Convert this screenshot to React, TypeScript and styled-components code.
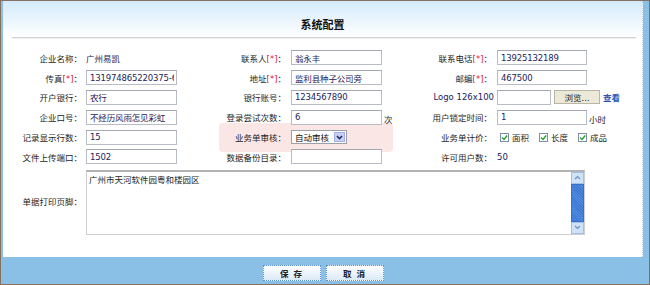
import React from 'react';
import styled, { createGlobalStyle } from 'styled-components';

const GlobalStyle = createGlobalStyle`
  html, body {
    margin: 0;
    padding: 0;
    background: #ffffff;
  }
  body {
    font-family: "DejaVu Sans", "Noto Sans CJK SC", sans-serif;
    font-size: 8.5px;
    color: #222;
  }
`;

const Frame = styled.div`
  width: 650px;
  height: 285px;
  box-sizing: border-box;
  border: 1px solid #85705f;
  background: #8bc0e6;
  display: flex;
  flex-direction: column;
`;

const Panel = styled.div`
  height: 256px;
  margin: 0 6px 0 2px;
  background: #ffffff;
  border-right: 1px dotted #b9d6ef;
  box-sizing: border-box;
`;

const Header = styled.div`
  height: 36px;
  padding-top: 18px;
  box-sizing: border-box;
  background: linear-gradient(#d3eafb, #ffffff);
  text-align: center;
`;

const Title = styled.div`
  font-size: 11px;
  line-height: 13px;
  font-weight: bold;
  color: #111;
`;

const Divider = styled.div`
  height: 1px;
  margin: 0 6px 0 9px;
  background: #d3d3d3;
  border-bottom: 1px solid #efefef;
`;

const FormGrid = styled.div`
  display: grid;
  grid-template-columns: 83px 124px 81px 129px 77px 1fr;
  grid-template-rows: repeat(6, 19.8px) auto;
  margin-top: 9px;
  align-items: center;
  isolation: isolate;
`;

const Label = styled.div<{ $pad?: number }>`
  text-align: right;
  padding-right: ${(p) => (p.$pad ?? 4)}px;
  white-space: nowrap;
  color: #1e1e1e;
`;

const Req = styled.span`
  color: #e31b1b;
`;

const Cell = styled.div`
  display: flex;
  align-items: center;
  gap: 2px;
  white-space: nowrap;
`;

const TextInput = styled.input<{ $w?: number }>`
  width: ${(p) => p.$w ?? 91}px;
  height: 15px;
  box-sizing: border-box;
  border: 1px solid #b8bcc6;
  border-top-color: #a3a7b1;
  padding: 0 2px 0 3px;
  font: inherit;
  letter-spacing: -0.15px;
  color: #22235c;
  background: #ffffff;
  outline: none;
`;

const Value = styled.span`
  color: #22235c;
`;

const Unit = styled.span`
  margin-top: 4px;
  color: #1e1e1e;
`;

const BrowseButton = styled.button`
  width: 46px;
  height: 14px;
  margin-left: 1px;
  padding: 0;
  font: inherit;
  color: #222;
  background: #ece9d8;
  border: 1px solid #b9b6a6;
`;

const ViewLink = styled.a`
  margin-left: 1px;
  color: #2a55b5;
  font-weight: bold;
  text-decoration: none;
`;

const AuditLabel = styled(Label)`
  position: relative;
  &::before {
    content: '';
    position: absolute;
    left: 9px;
    top: -8px;
    bottom: -9px;
    width: 174px;
    background: #fbe6e6;
    border-radius: 4px;
    z-index: -1;
  }
`;

const SelectBox = styled.div`
  width: 56px;
  height: 14px;
  box-sizing: border-box;
  border: 1px solid #9d9fa8;
  background: #ffffff;
  display: flex;
  align-items: center;
  justify-content: space-between;
  padding-left: 3px;
  color: #111;
`;

const SelectArrow = styled.span`
  width: 11px;
  height: 10px;
  margin-right: 1px;
  background: #c9d0f3;
  border: 1px solid #a3afe6;
  box-sizing: border-box;
  display: flex;
  align-items: center;
  justify-content: center;
`;

const Checks = styled.div`
  display: flex;
  align-items: center;
  gap: 10px;
  padding-left: 3px;
`;

const CheckItem = styled.label`
  display: flex;
  align-items: center;
  gap: 3px;
  color: #1e1e1e;
`;

const CheckBox = styled.span`
  width: 9px;
  height: 9px;
  box-sizing: border-box;
  border: 1px solid #7d8fa8;
  background: #ffffff;
  display: flex;
  align-items: center;
  justify-content: center;
`;

const MemoLabel = styled(Label)`
  grid-column: 1;
`;

const MemoBox = styled.div`
  grid-column: 2 / span 5;
  width: 499px;
  height: 65px;
  margin-top: 3px;
  box-sizing: border-box;
  border: 1px solid #cfcfcf;
  border-top: 2px solid #b3b3b3;
  display: flex;
`;

const MemoText = styled.textarea`
  flex: 1;
  border: none;
  resize: none;
  padding: 1px 2px;
  font: inherit;
  color: #222;
  outline: none;
  overflow: hidden;
`;

const ScrollBar = styled.div`
  width: 13px;
  display: flex;
  flex-direction: column;
  background: #c4dbf5;
`;

const ScrollBtn = styled.div`
  height: 12px;
  box-sizing: border-box;
  border: 1px solid #9fc0ea;
  background: #cfe2f8;
  display: flex;
  align-items: center;
  justify-content: center;
`;

const ScrollThumb = styled.div`
  flex: 1;
  background: repeating-linear-gradient(45deg, #3d7ad6 0 1px, #4f8ae0 1px 2px);
  border: 1px solid #3a6fc5;
`;

const BottomBar = styled.div`
  flex: 1;
  display: flex;
  justify-content: center;
  align-items: flex-start;
  gap: 5px;
  padding: 8px 6px 0 2px;
`;

const ActionButton = styled.button`
  width: 58px;
  height: 16px;
  padding: 0;
  font: inherit;
  font-weight: bold;
  letter-spacing: 1px;
  color: #222;
  background: linear-gradient(#ffffff, #dbe9f8);
  border: 1px dotted #5f93cf;
  white-space: pre;
`;

const Arrow = ({ up }: { up?: boolean }) => (
  <svg width="7" height="5" viewBox="0 0 7 5">
    <path
      d={up ? 'M1 4 L3.5 1.5 L6 4' : 'M1 1 L3.5 3.5 L6 1'}
      fill="none"
      stroke="#6f92c4"
      strokeWidth="1.2"
    />
  </svg>
);

const Check = () => (
  <svg width="7" height="7" viewBox="0 0 7 7">
    <path d="M1 3.5 L3 5.5 L6.2 1.5" fill="none" stroke="#22a033" strokeWidth="1.4" />
  </svg>
);

function Required({ text }: { text: string }) {
  return (
    <>
      {text}
      <Req>[*]</Req>：
    </>
  );
}

function App() {
  return (
    <>
      <GlobalStyle />
      <Frame>
        <Panel>
          <Header>
            <Title>系统配置</Title>
          </Header>
          <Divider />
          <FormGrid>
            <Label>企业名称：</Label>
            <Cell>
              <Value>广州易凯</Value>
            </Cell>
            <Label $pad={5}>
              <Required text="联系人" />
            </Label>
            <Cell>
              <TextInput defaultValue="翁永丰" />
            </Cell>
            <Label $pad={5}>
              <Required text="联系电话" />
            </Label>
            <Cell>
              <TextInput defaultValue="13925132189" $w={90} />
            </Cell>

            <Label>
              <Required text="传真" />
            </Label>
            <Cell>
              <TextInput defaultValue="131974865220375-68" $w={91} />
            </Cell>
            <Label $pad={5}>
              <Required text="地址" />
            </Label>
            <Cell>
              <TextInput defaultValue="监利县种子公司旁" />
            </Cell>
            <Label $pad={5}>
              <Required text="邮编" />
            </Label>
            <Cell>
              <TextInput defaultValue="467500" $w={90} />
            </Cell>

            <Label>开户银行：</Label>
            <Cell>
              <TextInput defaultValue="农行" />
            </Cell>
            <Label $pad={5}>银行账号：</Label>
            <Cell>
              <TextInput defaultValue="1234567890" />
            </Cell>
            <Label $pad={3}>
              <Value>Logo 126x100</Value>
            </Label>
            <Cell>
              <TextInput defaultValue="" $w={54} />
              <BrowseButton>浏览...</BrowseButton>
              <ViewLink href="#">查看</ViewLink>
            </Cell>

            <Label>企业口号：</Label>
            <Cell>
              <TextInput defaultValue="不经历风雨怎见彩虹" />
            </Cell>
            <Label $pad={5}>登录尝试次数：</Label>
            <Cell>
              <TextInput defaultValue="6" />
              <Unit>次</Unit>
            </Cell>
            <Label $pad={5}>用户锁定时间：</Label>
            <Cell>
              <TextInput defaultValue="1" $w={90} />
              <Unit>小时</Unit>
            </Cell>

            <Label>记录显示行数：</Label>
            <Cell>
              <TextInput defaultValue="15" />
            </Cell>
            <AuditLabel $pad={5}>业务单审核：</AuditLabel>
            <Cell>
              <SelectBox>
                自动审核
                <SelectArrow>
                  <svg width="7" height="5" viewBox="0 0 7 5">
                    <path d="M1 1 L3.5 3.7 L6 1" fill="none" stroke="#1d2458" strokeWidth="1.5" />
                  </svg>
                </SelectArrow>
              </SelectBox>
            </Cell>
            <Label $pad={5}>业务单计价：</Label>
            <Checks>
              {['面积', '长度', '成品'].map((name) => (
                <CheckItem key={name}>
                  <CheckBox>
                    <Check />
                  </CheckBox>
                  {name}
                </CheckItem>
              ))}
            </Checks>

            <Label>文件上传端口：</Label>
            <Cell>
              <TextInput defaultValue="1502" />
            </Cell>
            <Label $pad={5}>数据备份目录：</Label>
            <Cell>
              <TextInput defaultValue="" />
            </Cell>
            <Label $pad={5}>许可用户数：</Label>
            <Cell>
              <Value>50</Value>
            </Cell>

            <MemoLabel>单据打印页脚：</MemoLabel>
            <MemoBox>
              <MemoText defaultValue="广州市天河软件园粤和楼园区" />
              <ScrollBar>
                <ScrollBtn>
                  <Arrow up />
                </ScrollBtn>
                <ScrollThumb />
                <ScrollBtn>
                  <Arrow />
                </ScrollBtn>
              </ScrollBar>
            </MemoBox>
          </FormGrid>
        </Panel>
        <BottomBar>
          <ActionButton>保 存</ActionButton>
          <ActionButton>取 消</ActionButton>
        </BottomBar>
      </Frame>
    </>
  );
}

export default App;
